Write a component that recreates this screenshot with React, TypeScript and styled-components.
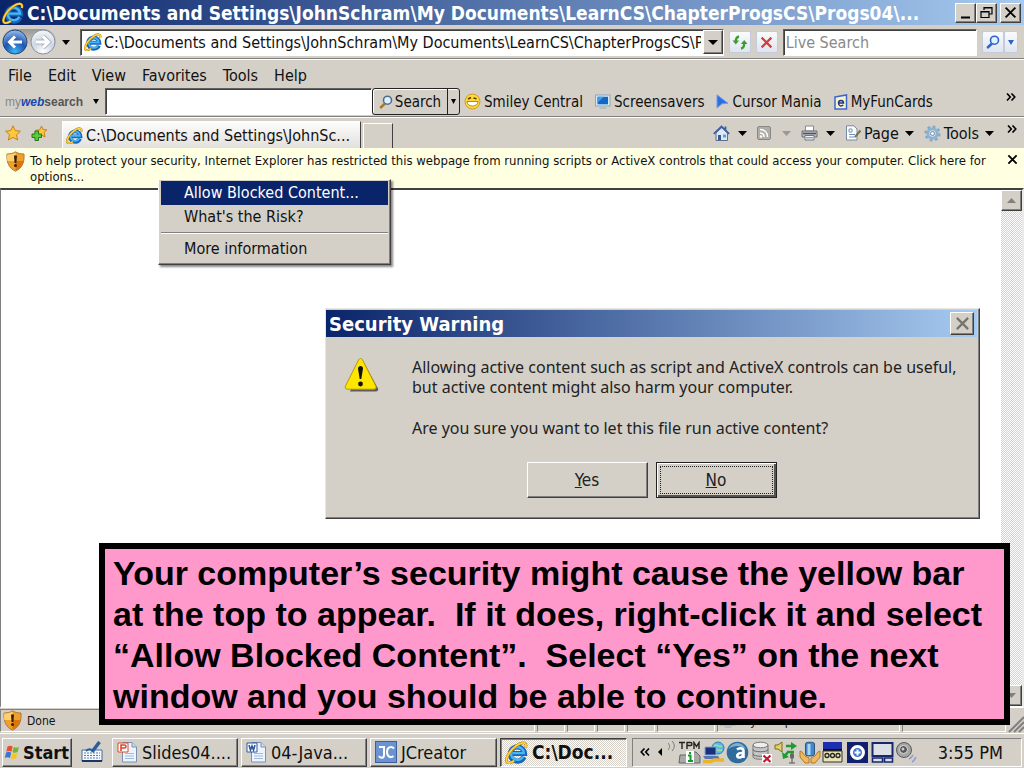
import React from "react";
import styled, { createGlobalStyle, css } from "styled-components";

const ui = `"DejaVu Sans Condensed", "DejaVu Sans", sans-serif`;
const FACE = "#d4d0c8";

const raised = css`
  border: 1px solid;
  border-color: #ffffff #404040 #404040 #ffffff;
  box-shadow: inset -1px -1px 0 #808080;
`;
const checker = css`
  background: repeating-conic-gradient(#ffffff 0% 25%, #d4d0c8 0% 50%) 0 0 / 2px 2px;
`;

const Global = createGlobalStyle`
  * { box-sizing: border-box; }
  body { margin: 0; font-family: ${ui}; color: #111; background: ${FACE}; }
  button, input { font: inherit; color: inherit; margin: 0; }
  button { padding: 0; border: 0; background: none; }
  svg { display: block; flex: none; }
`;

const Screen = styled.div`
  position: relative;
  display: flex;
  flex-direction: column;
  min-height: 100vh;
  background: ${FACE};
`;

const TitleBar = styled.header`
  display: flex;
  align-items: center;
  gap: 3px;
  height: 25px;
  padding: 0 3px 0 2px;
  background: linear-gradient(90deg, #0a246a, #a6caf0);
  color: #fff;
`;
const Title = styled.h1<{ $size: number }>`
  flex: 1;
  min-width: 0;
  margin: 0;
  overflow: hidden;
  font-size: ${(p) => p.$size}px;
  line-height: 24px;
  font-weight: bold;
  white-space: nowrap;
`;
const WindowButton = styled.button<{ $gap?: boolean }>`
  ${raised}
  display: grid;
  place-items: center;
  width: 21px;
  height: 20px;
  margin-left: ${(p) => (p.$gap ? 0 : -3)}px;
  background: ${FACE};
  color: #000;
`;

const NavRow = styled.div`
  display: flex;
  align-items: center;
  height: 35px;
  padding: 0 6px 0 2px;
  gap: 5px;
  border-bottom: 1px solid #fff;
  box-shadow: inset 0 -1px 0 #808080;
`;
const HistoryButtons = styled.div`
  display: flex;
  align-items: center;
  width: 73px;
  gap: 6px;
`;
const HistoryPair = styled.div`
  display: flex;
  gap: 2px;
  border-radius: 13px;
  background: linear-gradient(#9b9894, #d4d0c8 70%);
`;
const Round = styled.button`
  border-radius: 50%;
`;
const Field = styled.div<{ $grow: number }>`
  display: flex;
  align-items: center;
  flex: ${(p) => p.$grow} 1 0;
  min-width: 0;
  height: 27px;
  background: #fff;
  border: 1px solid;
  border-color: #606060 #fff #fff #606060;
  box-shadow: inset 1px 1px 0 #404040;
`;
const AddressField = styled(Field)`
  padding-left: 3px;
`;
const TextBox = styled.input`
  flex: 1;
  min-width: 0;
  width: 100%;
  height: 24px;
  padding: 0 2px;
  border: 0;
  outline: 0;
  background: transparent;
  font-size: 16px;
  &::placeholder { color: #8a8a8a; opacity: 1; }
`;
const DropButton = styled.button`
  ${raised}
  display: grid;
  place-items: center;
  flex: none;
  width: 20px;
  height: 24px;
  background: ${FACE};
`;
const SoftButton = styled.button<{ $w?: number }>`
  display: grid;
  place-items: center;
  flex: none;
  width: ${(p) => p.$w ?? 22}px;
  height: 22px;
  border: 1px solid #c3cbdc;
  border-radius: 2px;
  background: linear-gradient(#fafbfd, #dfe4ee);
`;
const SoftPair = styled.div`
  display: flex;
`;

const MenuRow = styled.nav`
  display: flex;
  align-items: center;
  gap: 16px;
  height: 28px;
  padding: 3px 8px 0;
  font-size: 16px;
`;

const LinksRow = styled.div`
  display: flex;
  align-items: center;
  height: 30px;
  padding-bottom: 2px;
  border-bottom: 1px solid #fff;
  box-shadow: inset 0 -1px 0 #808080;
  font-size: 15px;
  white-space: nowrap;
`;
const Brand = styled.button`
  display: flex;
  align-items: center;
  gap: 10px;
  flex: none;
  width: 105px;
  padding-left: 5px;
  font: bold 12px "Liberation Sans", Arial, sans-serif;
  color: #555;
  i { color: #1648b0; }
  b { font-weight: normal; color: #888; }
`;
const SearchField = styled(Field)`
  flex: 0 1 267px;
`;
const SearchSplit = styled.div`
  display: flex;
  flex: none;
  height: 27px;
  border: 1px solid #222;
  border-radius: 3px;
  box-shadow: inset 1px 1px 0 #fff;
`;
const SearchPart = styled.button<{ $w: number }>`
  display: flex;
  align-items: center;
  justify-content: center;
  gap: 2px;
  width: ${(p) => p.$w}px;
  & + & { border-left: 1px solid #222; }
`;
const Links = styled.div`
  display: flex;
  align-items: center;
  gap: 12px;
  padding-left: 4px;
`;
const LinkItem = styled.button`
  display: flex;
  align-items: center;
  gap: 3px;
`;
const Overflow = styled.button`
  align-self: flex-start;
  margin-left: auto;
  padding: 5px 8px 0 0;
`;

const TabRow = styled.div`
  display: flex;
  align-items: flex-end;
  height: 30px;
  font-size: 16px;
  white-space: nowrap;
`;
const Favs = styled.div`
  display: flex;
  align-items: center;
  gap: 10px;
  width: 62px;
  height: 30px;
  padding-left: 5px;
`;
const Tab = styled.button`
  display: flex;
  align-items: center;
  gap: 3px;
  width: 299px;
  height: 27px;
  padding-left: 3px;
  border-top: 1px solid #fff;
  border-left: 1px solid #fff;
  border-right: 1px solid #404040;
  background: linear-gradient(#fdfdfd, #e2e0dc);
`;
const NewTab = styled.button`
  width: 30px;
  height: 25px;
  margin-left: 2px;
  border-top: 1px solid #fff;
  border-left: 1px solid #fff;
  border-right: 1px solid #404040;
`;
const Commands = styled.div`
  display: flex;
  align-items: center;
  gap: 10px;
  height: 30px;
  margin-left: auto;
`;
const Command = styled.button<{ $gap?: number }>`
  display: flex;
  align-items: center;
  gap: ${(p) => p.$gap ?? 8}px;
`;
const CommandLabel = styled.span`
  display: flex;
  align-items: center;
  gap: 3px;
`;
const MoreCommands = styled(Overflow)`
  padding: 7px 6px 0 2px;
`;

const InfoBar = styled.div`
  position: relative;
  display: flex;
  gap: 5px;
  height: 40px;
  padding: 3px 6px 0;
  background: #ffffe1;
  font-size: 13px;
  line-height: 16px;
`;
const InfoText = styled.p`
  flex: 1;
  margin: 0;
  padding: 2px 8px 0 0;
`;
const InfoClose = styled.button`
  align-self: flex-start;
  padding-top: 3px;
`;

const ContextMenu = styled.div`
  position: absolute;
  z-index: 2;
  left: 158px;
  top: 31px;
  display: flex;
  flex-direction: column;
  width: 233px;
  padding: 1px 2px 3px;
  ${raised}
  box-shadow: inset -1px -1px 0 #808080, 2px 2px 2px #00000077;
  background: ${FACE};
  font-size: 16px;
`;
const MenuItem = styled.button<{ $active?: boolean }>`
  height: 24px;
  padding-left: 23px;
  text-align: left;
  background: ${(p) => (p.$active ? "#0a246a" : "transparent")};
  color: ${(p) => (p.$active ? "#fff" : "#111")};
`;
const Divider = styled.hr`
  width: 100%;
  margin: 3px 0;
  border: 0;
  border-top: 1px solid #808080;
  border-bottom: 1px solid #fff;
`;

const Viewport = styled.main`
  position: relative;
  display: flex;
  justify-content: flex-end;
  flex: 1;
  min-height: 516px;
  border: 1px solid;
  border-width: 2px 2px 2px 1px;
  border-color: #404040 #eceae6 #fff #808080;
  background: #fff;
`;
const ScrollTrack = styled.div`
  ${checker}
  display: flex;
  flex-direction: column;
  justify-content: space-between;
  width: 21px;
`;
const ScrollButton = styled.button`
  ${raised}
  display: grid;
  place-items: center;
  height: 21px;
  background: ${FACE};
`;

const Dialog = styled.section`
  position: absolute;
  left: 324px;
  top: 118px;
  width: 655px;
  height: 211px;
  border: 1px solid;
  border-color: #e8e6e0 #404040 #404040 #e8e6e0;
  box-shadow: inset -1px -1px 0 #808080;
  background: ${FACE};
`;
const DialogTitle = styled.header`
  display: flex;
  align-items: center;
  height: 27px;
  margin: 1px 2px 0 0;
  padding: 0 3px;
  background: linear-gradient(90deg, #0a246a, #a6caf0);
  color: #fff;
`;
const DialogClose = styled.button`
  ${raised}
  display: grid;
  place-items: center;
  width: 24px;
  height: 23px;
  background: ${FACE};
`;
const DialogBody = styled.div`
  display: flex;
  gap: 33px;
  padding: 20px 16px 0 18px;
  font-family: "Noto Sans", ${ui};
  font-size: 16px;
  line-height: 20px;
  color: #222;
`;
const DialogText = styled.div`
  white-space: nowrap;
  p { margin: 0 0 21px; }
`;
const DialogButtons = styled.div`
  display: flex;
  justify-content: center;
  gap: 8px;
  padding: 3px 2px 0 0;
  font-size: 17px;
`;
const PushButton = styled.button<{ $focus?: boolean }>`
  ${raised}
  width: 121px;
  height: 36px;
  padding: 3px;
  border-color: ${(p) => (p.$focus ? "#222" : "#fff #404040 #404040 #fff")};
  box-shadow: ${(p) => (p.$focus ? "inset 1px 1px 0 #fff, inset -2px -2px 0 #555" : "inset -1px -1px 0 #808080")};
  background: ${FACE};
  color: #222;
`;
const FocusRing = styled.span<{ $on?: boolean }>`
  display: block;
  height: 28px;
  line-height: 26px;
  border: 1px dotted ${(p) => (p.$on ? "#222" : "transparent")};
`;

const Callout = styled.aside`
  position: absolute;
  z-index: 3;
  left: 99px;
  right: 14px;
  bottom: 43px;
  padding: 4px 8px 2px;
  border: 6px solid #000;
  background: #ff99cc;
  color: #000;
  font: bold 34px/41px "Liberation Sans", Arial, sans-serif;
  white-space: pre-wrap;
`;

const StatusBar = styled.footer`
  display: flex;
  height: 25px;
  padding: 1px 0;
  font-size: 12px;
`;
const StatusCell = styled.div<{ $w?: number; $pad?: number }>`
  display: flex;
  align-items: center;
  gap: 5px;
  flex: ${(p) => (p.$w ? `0 0 ${p.$w}px` : "1 1 0")};
  padding-left: ${(p) => p.$pad ?? 2}px;
  margin-right: 2px;
  border: 1px solid;
  border-color: #808080 #fff #fff #808080;
`;

const TaskBar = styled.div`
  display: flex;
  align-items: center;
  gap: 3px;
  height: 35px;
  padding: 2px 2px 0;
  border-top: 1px solid #fff;
  font-size: 18px;
  white-space: nowrap;
`;
const TaskButton = styled.button<{ $w: number; $active?: boolean }>`
  ${raised}
  display: flex;
  align-items: center;
  gap: 4px;
  flex: 0 1 ${(p) => p.$w}px;
  min-width: 0;
  height: 29px;
  padding-left: 4px;
  overflow: hidden;
  ${(p) =>
    p.$active &&
    css`
      ${checker}
      border-color: #404040 #fff #fff #404040;
      box-shadow: inset 1px 1px 0 #808080;
      font-size: 19px;
      font-weight: bold;
    `}
`;
const StartButton = styled(TaskButton)`
  gap: 1px;
  padding-left: 1px;
  font-weight: bold;
`;
const QuickLaunch = styled.button`
  display: grid;
  place-items: center;
  width: 34px;
`;
const Tray = styled.div`
  display: flex;
  align-items: center;
  gap: 1px;
  height: 29px;
  margin-left: auto;
  padding: 0 18px 0 6px;
  border: 1px solid;
  border-color: #808080 #fff #fff #808080;
`;
const Clock = styled.time`
  padding-left: 20px;
`;

const IE = ({ s = 18 }: { s?: number }) => (
  <svg width={s} height={s} viewBox="0 0 20 20">
    <path d="M16.500 13.800A6.200 6.200 0 1 1 17 10.900H6.500" fill="none" stroke="#1667bd" strokeWidth="4.400" />
    <path d="M15.800 13.400A5.600 5.600 0 1 1 16.400 10.500H6.500" fill="none" stroke="#49b5f2" strokeWidth="2" />
    <path d="M18 5.500C19.400.8 15 .4 10 4 4.400 8 .2 14.800 1.500 18c.9 2 4 1 6.500-.8" fill="none" stroke="#a87808" strokeWidth="2.400" />
    <path d="M18 5.500C19.400.8 15 .4 10 4 4.400 8 .2 14.800 1.500 18c.9 2 4 1 6.500-.8" fill="none" stroke="#ffd23f" strokeWidth="1.600" />
  </svg>
);
const Caret = ({ w = 9, c = "#000" }: { w?: number; c?: string }) => (
  <svg width={w} height="5" viewBox="0 0 10 5" preserveAspectRatio="none"><path d="M0 0h10L5 5z" fill={c} /></svg>
);
const Cross = ({ s = 12, c = "#000", w = 2 }: { s?: number; c?: string; w?: number }) => (
  <svg width={s} height={s} viewBox="0 0 12 12"><path d="M1.500 1.500l9 9M10.500 1.500l-9 9" stroke={c} strokeWidth={w} /></svg>
);
const Chevrons = ({ flip, w = 10 }: { flip?: boolean; w?: number }) => (
  <svg width={w} height="8" viewBox="0 0 10 8">
    <path d={flip ? "M4.500.5L1.200 4l3.300 3.500M9 .5L5.700 4 9 7.500" : "M1 .5L4.300 4 1 7.500M5.500.5L8.800 4 5.500 7.500"} fill="none" stroke="#000" strokeWidth="1.600" />
  </svg>
);
const Arrow = ({ forward }: { forward?: boolean }) => (
  <svg width="26" height="26" viewBox="0 0 26 26">
    <defs>
      <radialGradient id={forward ? "fw" : "bk"} cx=".5" cy=".9" r=".9">
        <stop offset="0" stopColor={forward ? "#fff" : "#41b4f4"} />
        <stop offset=".5" stopColor={forward ? "#cdd6e2" : "#1c56b0"} />
        <stop offset="1" stopColor={forward ? "#f5f8fb" : "#9cc0ec"} />
      </radialGradient>
    </defs>
    <circle cx="13" cy="13" r="12" fill={`url(#${forward ? "fw" : "bk"})`} stroke={forward ? "#8992a0" : "#27487e"} />
    <path d={forward ? "M6 13h12M13 7.500l5.500 5.500-5.500 5.500" : "M20 13H8M13 7.500L7.500 13l5.500 5.500"} fill="none" stroke={forward ? "#aab4c2" : "none"} strokeWidth="4.800" />
    <path d={forward ? "M6 13h12M13 7.500l5.500 5.500-5.500 5.500" : "M20 13H8M13 7.500L7.500 13l5.500 5.500"} fill="none" stroke="#fff" strokeWidth="3" />
  </svg>
);
const Shield = () => (
  <svg width="19" height="21" viewBox="0 0 19 21">
    <path d="M9.500.8C7 2.500 4 3 1 3c-.5 8 1.500 14 8.500 17.200C16.500 17 18.500 11 18 3c-3 0-6-.5-8.500-2.200z" fill="#f0a02a" stroke="#a87b45" />
    <path d="M9.500 1.500V10H1.300C1 8 1 6 1.300 3.500c3 0 6-.5 8.200-2z" fill="#ffcf6e" />
    <path d="M9.500 10h8.200c-.8 4.500-3.200 7.600-8.200 9.600z" fill="#d9760f" />
    <path d="M8 4.500h3l-.6 7.500H8.600z" fill="#33200a" /><circle cx="9.500" cy="14.500" r="1.500" fill="#33200a" />
  </svg>
);
const Magnifier = ({ c = "#2d62c9", handle = "#2d62c9", s = 14 }: { c?: string; handle?: string; s?: number }) => (
  <svg width={s} height={s} viewBox="0 0 14 14">
    <path d="M6 8.500L1.200 13" stroke={handle} strokeWidth="2.400" />
    <circle cx="8.500" cy="5.200" r="4" fill="#dff2ff" stroke={c} strokeWidth="1.600" />
  </svg>
);
const Star = ({ plus }: { plus?: boolean }) => (
  <svg width="16" height="16" viewBox="0 0 16 16">
    <path d={plus ? "M10.500 1l1.600 3.500 3.700.4-2.800 2.600 1 4.500-3.500-2-3 2-.8-4-2-2.600 4-.5z" : "M8 .8l2.200 4.800 5.200.6-3.900 3.500 1.100 5.300L8 12.400 3.400 15l1.100-5.300L.6 6.200l5.200-.6z"} fill="#ffc83a" stroke="#c5811b" />
    {plus && <path d="M4 6h3.500v3h3v3.500h-3v3H4v-3H1V9h3z" fill="#5cc93d" stroke="#21791a" />}
  </svg>
);
const Smiley = () => (
  <svg width="17" height="17" viewBox="0 0 17 17">
    <circle cx="8.500" cy="8.500" r="7.500" fill="#ffd83a" stroke="#d69a16" />
    <path d="M3 8.500h11c0 6-11 6-11 0z" fill="#fff" stroke="#8a6412" strokeWidth=".7" />
    <path d="M4 6l3-1.500M9.500 5l3 .8" stroke="#5a3b00" strokeWidth="1.400" />
  </svg>
);
const Monitor = () => (
  <svg width="16" height="16" viewBox="0 0 16 16">
    <rect x=".5" y="1" width="14.500" height="11" fill="#dce8f4" stroke="#8ba3bb" />
    <rect x="2.500" y="2.800" width="10.500" height="7.500" fill="#1068c4" /><path d="M2.500 2.800H9l-6.500 6z" fill="#3c9cec" />
    <path d="M6 12h4l2 3H4z" fill="#b4bdc8" />
  </svg>
);
const CursorIcon = () => (
  <svg width="13" height="15" viewBox="0 0 13 15"><path d="M1 .8l11 8.500-6 .5L1 14z" fill="#2f6de0" stroke="#6e9cf0" /></svg>
);
const CardIcon = () => (
  <svg width="14" height="16" viewBox="0 0 14 16">
    <path d="M1 3l11.500-2v14H1z" fill="#f7f4cc" stroke="#3a67cf" strokeWidth="1.500" />
    <path d="M4.500 9H9.500C9.500 5.500 4.500 5.500 4.500 9s3 3.500 4.800 2" fill="none" stroke="#24337f" strokeWidth="1.500" />
  </svg>
);
const Home = () => (
  <svg width="17" height="17" viewBox="0 0 17 17">
    <path d="M3 8v7.500h11.500V8L8.800 2.500z" fill="#dfe8f5" stroke="#5b6f92" /><path d="M.8 8.800L8.500 1.500l7.700 7.300M12.500 1.500v4" fill="none" stroke="#3d5f9c" strokeWidth="1.800" />
    <path d="M5 10h3v5H5z" fill="#365893" /><path d="M10 9.500h3v3h-3z" fill="#56a2dd" />
  </svg>
);
const Rss = () => (
  <svg width="14" height="14" viewBox="0 0 14 14">
    <rect x=".5" y=".5" width="13" height="13" rx="1.500" fill="#b0aeaa" stroke="#8a8884" />
    <path d="M3 3.500c4.500 0 7.500 3 7.500 7.500M3 7c2.600 0 4 1.500 4 4" fill="none" stroke="#fff" strokeWidth="1.500" /><circle cx="4" cy="10.500" r="1.200" fill="#fff" />
  </svg>
);
const Printer = () => (
  <svg width="17" height="16" viewBox="0 0 17 16">
    <path d="M4.500 1h8v5h-8z" fill="#fff" stroke="#888" /><path d="M1 6h15v6H1z" fill="#b9bcc0" stroke="#6b6f74" />
    <path d="M2 8.500h13" stroke="#50545a" strokeWidth="1.500" /><path d="M4 10.500h9V15H4z" fill="#f4f4f4" stroke="#777" /><path d="M5 12.800h7" stroke="#4385c8" />
  </svg>
);
const PageIcon = () => (
  <svg width="16" height="16" viewBox="0 0 16 16">
    <path d="M1.500.8H9L12 4v11H1.500z" fill="#fdfdfd" stroke="#7888a0" /><path d="M4 4h3v3H4zM4 9.500h6M4 12h6" fill="none" stroke="#6e94c5" />
    <path d="M15.500 5.500L10 12" stroke="#7d7441" strokeWidth="2" />
  </svg>
);
const Gear = () => (
  <svg width="17" height="17" viewBox="0 0 17 17">
    <circle cx="8.500" cy="8.500" r="6.800" fill="none" stroke="#7fa6c6" strokeWidth="2.500" strokeDasharray="2.700 2.640" />
    <circle cx="8.500" cy="8.500" r="4.700" fill="#d5e3ee" stroke="#8fb3cf" strokeWidth="3" /><circle cx="8.500" cy="8.500" r="2" fill="#f4f8fb" stroke="#6b90b0" />
  </svg>
);
const Refresh = () => (
  <svg width="16" height="15" viewBox="0 0 16 15">
    <path d="M7 1.500C4.500 2 3.800 4 3.800 6.500" fill="none" stroke="#3c9c32" strokeWidth="2.300" /><path d="M.5 5.500h6.600L3.800 9.500z" fill="#3c9c32" />
    <path d="M9 13.500c2.500-.5 3.200-2.500 3.200-5" fill="none" stroke="#3c9c32" strokeWidth="2.300" /><path d="M8.900 9h6.600l-3.300-4z" fill="#3c9c32" />
  </svg>
);
const Warning = () => (
  <svg width="35" height="35" viewBox="0 0 35 35">
    <path d="M18.500 3L34 31.500c.5 2-.5 3-2 3H6z" fill="#5e5c55" />
    <path d="M16.500 1.500c1 0 1.600.5 2 1.300L31.800 29c.8 1.800 0 3.200-1.800 3.200H3.200C1.500 32.200.7 30.800 1.500 29L14.600 2.800c.4-.8 1-1.300 1.900-1.300z" fill="#ffe500" stroke="#b39a00" />
    <path d="M14 11.500c0-3.500 5-3.500 5 0L17.300 22h-1.600z" fill="#111" /><circle cx="16.500" cy="27" r="2.400" fill="#111" />
  </svg>
);
const WinLogo = () => (
  <svg width="18" height="18" viewBox="0 0 18 18">
    <path d="M3.500 3.500c2-1.200 3.500-1 5.200 0L7.500 8.700c-1.700-1-3.300-1-5.200 0z" fill="#e8502c" /><path d="M9.700 4c1.900 1 3.400 1 5.300-.2l-1.300 5.300c-1.800 1-3.400 1-5.200.1z" fill="#72b62f" />
    <path d="M2 9.700c2-1.200 3.500-1 5.200 0L6 15c-1.700-1-3.200-1-5.200 0z" fill="#3c74d6" /><path d="M8.200 10.300c1.900 1 3.400 1 5.300-.2l-1.300 5.200c-1.800 1-3.400 1-5.200.2z" fill="#f7c325" />
  </svg>
);
const Tablet = () => (
  <svg width="22" height="22" viewBox="0 0 22 22">
    <path d="M1 9h20v11H1z" fill="#f6f9fd" stroke="#486b9c" /><path d="M3 12h16M3 14.500h16M3 17h16" stroke="#567eae" strokeDasharray="2 1" />
    <path d="M1 20h20" stroke="#1c3765" strokeWidth="2" /><path d="M18.500 1L11 11" stroke="#2c5d9c" strokeWidth="3.500" /><path d="M5 10c3-3 5-2 7 0" fill="none" stroke="#2c5d9c" strokeWidth="2" />
  </svg>
);
const Doc = ({ word }: { word?: boolean }) => (
  <svg width="21" height="22" viewBox="0 0 21 22">
    <path d="M5.500 1.500H15l4.500 4.500v15h-14z" fill="#edf4fc" stroke="#7890b4" /><path d="M15 1.500V6h4.500" fill="#c8dcf2" stroke="#7890b4" />
    <path d="M8 12.500h9M8 15h9M8 17.500h9" stroke="#9dbbe0" />
    <path d="M1 2h10v9H1z" fill="#fff" stroke={word ? "#2d58a6" : "#d8492c"} />
    <path d={word ? "M3 4l1.500 5L6 5l1.500 4L9 4" : "M4 10V4h3.500c2 0 2 3 0 3H4"} fill="none" stroke={word ? "#2d58a6" : "#d8492c"} strokeWidth="1.600" />
  </svg>
);
const JC = () => (
  <svg width="22" height="22" viewBox="0 0 22 22">
    <rect x=".5" y=".5" width="21" height="21" fill="#6b93d0" stroke="#3d5f9e" />
    <path d="M4 6h5v8c0 3.500-4 3.500-5 1M19 7.500c-3-3-7-1-7 3.500s3.500 6.500 6.500 4" fill="none" stroke="#fff" strokeWidth="2" />
  </svg>
);
const Tpm = () => (
  <svg width="23" height="23" viewBox="0 0 23 23">
    <path d="M1 1.500h6M4 1.500V8M9 8V1.500h3.500c2 0 2 3 0 3H9M16 8V1.500l2.500 4 2.500-4V8" fill="none" stroke="#222" strokeWidth="1.400" />
    <path d="M2 14h6l1-3h9l4 4v7H1z" fill="#a9a9a9" stroke="#666" /><rect x="8" y="10" width="8" height="12" fill="#fff" />
    <path d="M10 14.500h2.500V20M10 20h5M12 11v2" fill="none" stroke="#159a27" strokeWidth="2" />
  </svg>
);
const Network = () => (
  <svg width="23" height="23" viewBox="0 0 23 23">
    <circle cx="16" cy="7" r="6" fill="#58b8ea" stroke="#2a7fb5" /><path d="M12 5c3-3 4 2 8 0M11 9c4-2 5 2 9 0" fill="none" stroke="#9ee08e" strokeWidth="1.500" />
    <path d="M3 6h11v8H3z" fill="#17307c" stroke="#8ba3cf" /><path d="M1 15h15l2 3H3z" fill="#5476b6" /><path d="M1 20.500h8l3-1.500h10" fill="none" stroke="#eab52a" strokeWidth="3.500" />
  </svg>
);
const BlueA = () => (
  <svg width="23" height="23" viewBox="0 0 23 23">
    <circle cx="11.500" cy="11.500" r="10.800" fill="#2f6c9c" /><path d="M2 8c5-8 14-8 18 0-6-4-12-4-18 0z" fill="#7db1d3" />
    <path d="M11 8.500c2.500-2 6.500-1.500 6.500 1.500v7M17 12c-7-.5-7 5-3.500 4.500 2 0 3.500-1.500 3.500-3" fill="none" stroke="#fff" strokeWidth="2.600" />
  </svg>
);
const Database = () => (
  <svg width="23" height="23" viewBox="-1 0 23 23">
    <path d="M2 4v12c0 3 15 3 15 0V4z" fill="#c6c6c6" stroke="#777" /><ellipse cx="9.500" cy="4" rx="7.500" ry="2.800" fill="#eee" stroke="#777" />
    <path d="M2 8.500c0 3 15 3 15 0M2 13c0 3 15 3 15 0" fill="none" stroke="#666" /><path d="M11 13h10v9H11z" fill="#fff" /><path d="M12.500 14.500l7 6.500M19.500 14.500l-7 6.500" stroke="#c41830" strokeWidth="2.200" />
  </svg>
);
const Audio = () => (
  <svg width="24" height="23" viewBox="0 0 24 23">
    <path d="M1 4h3l4-3v10L4 8H1z" fill="#e6d264" stroke="#776a22" /><path d="M12 5h7M20 11h-6l-4 5" fill="none" stroke="#1f9b2f" strokeWidth="2.600" />
    <path d="M17 1l6 4-6 4zM8 11l1 7 6-2z" fill="#1f9b2f" /><rect x="16" y="12" width="4" height="6" rx="2" fill="#666" /><path d="M18 18v4M15 22h6" stroke="#555" />
  </svg>
);
const Hands = () => (
  <svg width="22" height="23" viewBox="0 0 22 23">
    <path d="M6.500 2.500C7 .8 15 .8 15.500 2.500v11c-.5 2-8.500 2-9 0z" fill="#4787c6" stroke="#265785" /><path d="M8.500 3h3v11h-3z" fill="#a9d4f4" />
    <path d="M1 10l2 1 3 4 4 2v5H6l-5-6zM21 10l-2 1-3 4-4 2v5h4l5-6z" fill="#f0b95c" stroke="#b4792a" />
  </svg>
);
const Chip = () => (
  <svg width="22" height="21" viewBox="0 0 22 21">
    <path d="M1 0h19v7H1z" fill="#1c2fae" /><path d="M1 7h19v2H1z" fill="#111" /><path d="M1 9h19v11H1z" fill="#e9e3b4" stroke="#333" />
    <g fill="none" stroke="#222" strokeWidth="1.300"><circle cx="5" cy="13.500" r="2" /><circle cx="10.500" cy="13.500" r="2" /><circle cx="16" cy="13.500" r="2" /></g>
  </svg>
);
const Quick = () => (
  <svg width="25" height="21" viewBox="-2 0 25 21"><rect width="21" height="21" fill="#12206c" /><circle cx="10.500" cy="10.500" r="6" fill="#3e73d1" stroke="#fff" strokeWidth="3" /><path d="M7.500 10.500h6M10.500 7.500v6" stroke="#fff" strokeWidth="2" /></svg>
);
const Display = () => (
  <svg width="23" height="21" viewBox="0 0 23 21">
    <path d="M1.500 1h20v13h-20z" fill="#dedfe5" stroke="#17296e" strokeWidth="2" /><path d="M1.500 16h10v4h-10zM13.500 16h8v4h-8z" fill="#dedfe5" stroke="#17296e" strokeWidth="1.600" />
  </svg>
);
const Speaker = () => (
  <svg width="22" height="22" viewBox="0 0 22 22">
    <circle cx="9" cy="9" r="7.500" fill="#a6a6a6" stroke="#5b5b5b" /><circle cx="8.500" cy="8.500" r="4" fill="#555" stroke="#e2e2e2" /><circle cx="8" cy="8" r="1.500" fill="#ccc" />
    <path d="M14 18c2-1 3-2 4-4M17 21c2-1 3-3 4-5" fill="none" stroke="#8e98d0" strokeWidth="1.600" />
  </svg>
);

const links = [
  { icon: <Smiley />, label: "Smiley Central" },
  { icon: <Monitor />, label: "Screensavers" },
  { icon: <CursorIcon />, label: "Cursor Mania" },
  { icon: <CardIcon />, label: "MyFunCards" },
];

export default function App() {
  return (
    <>
      <Global />
      <Screen>
        <TitleBar>
          <IE s={22} />
          <Title $size={19}>{"C:\\Documents and Settings\\JohnSchram\\My Documents\\LearnCS\\ChapterProgsCS\\Progs04\\..."}</Title>
          <WindowButton $gap aria-label="Minimize"><svg width="12" height="12"><path d="M1 10.500h9" stroke="#000" strokeWidth="2" /></svg></WindowButton>
          <WindowButton aria-label="Restore"><svg width="13" height="13"><path d="M4 4V1.500h8V8H9M1 5.500h8v6H1z M1 6h8M4 2h8" fill="none" stroke="#000" strokeWidth="1.200" /></svg></WindowButton>
          <WindowButton $gap aria-label="Close"><Cross s={13} w={1.700} /></WindowButton>
        </TitleBar>

        <NavRow>
          <HistoryButtons>
            <HistoryPair>
              <Round aria-label="Back"><Arrow /></Round>
              <Round aria-label="Forward"><Arrow forward /></Round>
            </HistoryPair>
            <button aria-label="Recent pages"><Caret w={8} /></button>
          </HistoryButtons>
          <AddressField $grow={644}>
            <IE s={18} />
            <TextBox aria-label="Address" readOnly defaultValue={"C:\\Documents and Settings\\JohnSchram\\My Documents\\LearnCS\\ChapterProgsCS\\Progs04"} />
            <DropButton aria-label="Address history"><Caret w={10} /></DropButton>
          </AddressField>
          <SoftButton aria-label="Refresh"><Refresh /></SoftButton>
          <SoftButton aria-label="Stop"><Cross s={13} c="#cf3f3f" w={2} /></SoftButton>
          <Field $grow={194}><TextBox aria-label="Live Search" placeholder="Live Search" /></Field>
          <SoftPair>
            <SoftButton aria-label="Search"><Magnifier /></SoftButton>
            <SoftButton $w={14} aria-label="Search options"><Caret w={6} c="#2d62c9" /></SoftButton>
          </SoftPair>
        </NavRow>

        <MenuRow>
          {["File", "Edit", "View", "Favorites", "Tools", "Help"].map((m) => <button key={m}>{m}</button>)}
        </MenuRow>

        <LinksRow>
          <Brand><span><b>my</b><i>web</i>search</span><Caret w={6} /></Brand>
          <SearchField $grow={0}><TextBox aria-label="My web search" /></SearchField>
          <SearchSplit>
            <SearchPart $w={74}><Magnifier c="#4d6d92" handle="#a9781f" />Search</SearchPart>
            <SearchPart $w={12} aria-label="Search menu"><Caret w={5} /></SearchPart>
          </SearchSplit>
          <Links>
            {links.map((l) => <LinkItem key={l.label}>{l.icon}{l.label}</LinkItem>)}
          </Links>
          <Overflow aria-label="More links"><Chevrons /></Overflow>
        </LinksRow>

        <TabRow>
          <Favs>
            <button aria-label="Favorites Center"><Star /></button>
            <button aria-label="Add to Favorites"><Star plus /></button>
          </Favs>
          <Tab><IE s={17} />{"C:\\Documents and Settings\\JohnSc..."}</Tab>
          <NewTab aria-label="New Tab" />
          <Commands>
            <Command aria-label="Home"><Home /><Caret /></Command>
            <Command aria-label="Feeds" $gap={11}><Rss /><Caret c="#999" /></Command>
            <Command aria-label="Print"><Printer /><Caret /></Command>
            <Command $gap={6}><CommandLabel><PageIcon />Page</CommandLabel><Caret /></Command>
            <Command $gap={6}><CommandLabel><Gear />Tools</CommandLabel><Caret /></Command>
            <MoreCommands aria-label="More commands"><Chevrons w={12} /></MoreCommands>
          </Commands>
        </TabRow>

        <InfoBar>
          <Shield />
          <InfoText>To help protect your security, Internet Explorer has restricted this webpage from running scripts or ActiveX controls that could access your computer. Click here for options...</InfoText>
          <InfoClose aria-label="Close bar"><Cross s={11} w={2} /></InfoClose>
          <ContextMenu role="menu">
            <MenuItem role="menuitem" $active>Allow Blocked Content...</MenuItem>
            <MenuItem role="menuitem">What's the Risk?</MenuItem>
            <Divider />
            <MenuItem role="menuitem">More information</MenuItem>
          </ContextMenu>
        </InfoBar>

        <Viewport>
          <ScrollTrack>
            <ScrollButton aria-label="Scroll up"><svg width="9" height="5"><path d="M0 5h9L4.500 0z" fill="#808080" /></svg></ScrollButton>
            <ScrollButton aria-label="Scroll down"><Caret c="#808080" /></ScrollButton>
          </ScrollTrack>
          <Dialog role="dialog" aria-label="Security Warning">
            <DialogTitle>
              <Title as="h2" $size={20}>Security Warning</Title>
              <DialogClose aria-label="Close"><Cross s={15} c="#77746e" w={1.800} /></DialogClose>
            </DialogTitle>
            <DialogBody>
              <Warning />
              <DialogText>
                <p>Allowing active content such as script and ActiveX controls can be useful,<br />but active content might also harm your computer.</p>
                <p>Are you sure you want to let this file run active content?</p>
              </DialogText>
            </DialogBody>
            <DialogButtons>
              <PushButton><FocusRing><u>Y</u>es</FocusRing></PushButton>
              <PushButton $focus><FocusRing $on><u>N</u>o</FocusRing></PushButton>
            </DialogButtons>
          </Dialog>
        </Viewport>

        <StatusBar>
          <StatusCell><Shield />Done</StatusCell>
          <StatusCell $w={28} /><StatusCell $w={28} /><StatusCell $w={28} /><StatusCell $w={28} /><StatusCell $w={58} />
          <StatusCell $w={183}><Monitor />My Computer</StatusCell>
          <StatusCell $w={104} $pad={20}>100%</StatusCell>
          <svg width="16" height="24" viewBox="0 0 16 24"><path d="M1 23L16 8M6 23L16 13M11 23l5-5" stroke="#808080" strokeWidth="2" /></svg>
        </StatusBar>

        <TaskBar>
          <StartButton $w={70}><WinLogo />Start</StartButton>
          <QuickLaunch aria-label="Tablet input panel"><Tablet /></QuickLaunch>
          <TaskButton $w={126}><Doc />Slides04....</TaskButton>
          <TaskButton $w={126}><Doc word />04-Java...</TaskButton>
          <TaskButton $w={127}><JC />JCreator</TaskButton>
          <TaskButton $w={127} $active><IE s={23} />{"C:\\Doc..."}</TaskButton>
          <Tray>
            <Chevrons flip w={12} />
            <svg width="14" height="8"><path d="M10 0v8L6 4z" fill="#000" /></svg>
            <svg width="10" height="24"><path d="M1 3c2 2 2 5 0 7M5 1c3 3 3 7 0 10" fill="none" stroke="#777" /></svg>
            <Tpm /><Network /><BlueA /><Database /><Audio /><Hands /><Chip /><Quick /><Display /><Speaker />
            <Clock>3:55 PM</Clock>
          </Tray>
        </TaskBar>

        <Callout>
          {"Your computer’s security might cause the yellow bar\nat the top to appear.  If it does, right-click it and select\n“Allow Blocked Content”.  Select “Yes” on the next\nwindow and you should be able to continue."}
        </Callout>
      </Screen>
    </>
  );
}
